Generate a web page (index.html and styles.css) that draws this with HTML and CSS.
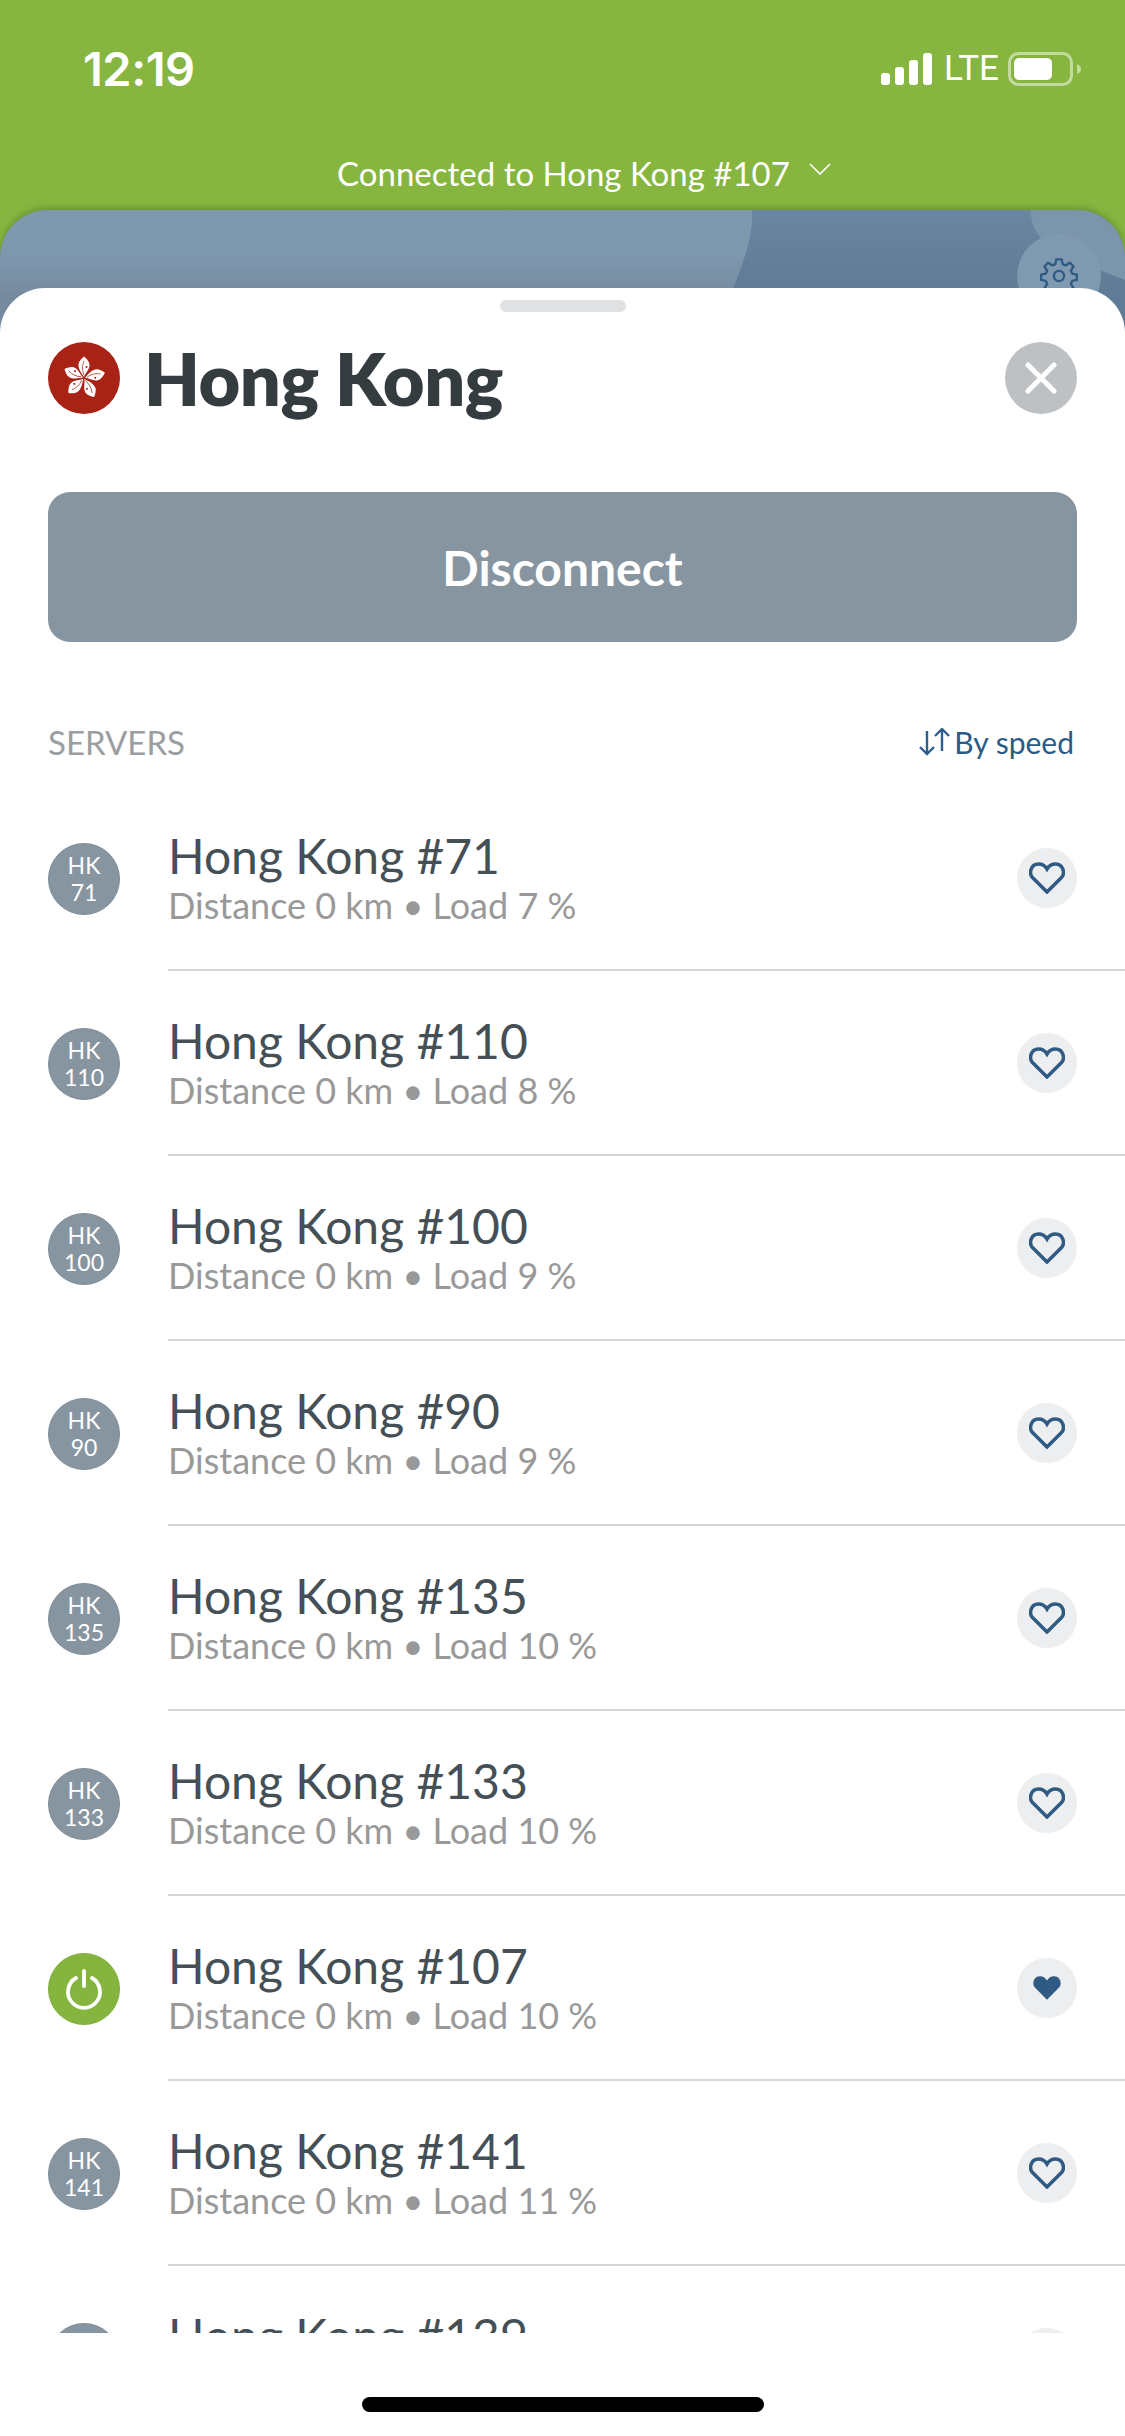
FILE: index.html
```html
<!DOCTYPE html>
<html lang="en">
<head>
    <meta charset="UTF-8">
    <meta name="viewport" content="width=device-width, initial-scale=1.0">
    <title>Hong Kong servers</title>
    <link rel="stylesheet" href="styles.css">
</head>
<body>
    <svg class="defs" width="0" height="0">
        <defs>
            <path id="heart" d="M18 30 L3.5 15.5 C-0.5 11 2 2 9.5 2 C13.5 2 16.5 4.5 18 7 C19.5 4.5 22.5 2 26.5 2 C34 2 36.5 11 32.5 15.5 Z"/>
            <g id="petal">
                <path fill="#fff" d="M0 -1 C-2 -4 -6 -9 -5.5 -14 C-5 -17 -2 -20 0 -21.5 C2.5 -19.5 6 -16 5.5 -12 C5 -8 1.5 -5 0 -1 Z"/>
                <path fill="none" stroke="#a82216" stroke-width=".7" d="M0 -3 C-2 -8 -2 -12 0 -17"/>
                <circle fill="#a82216" cx="2.5" cy="-11" r="1"/>
            </g>
        </defs>
    </svg>
    <div class="app">
        <div class="topbar">
            <div class="status">
                <span class="time">12:19</span>
                <div class="status-right">
                    <svg class="signal" width="52" height="32" viewBox="0 0 52 32" fill="#fff">
                        <rect x="0" y="20" width="9" height="12" rx="3"/>
                        <rect x="14" y="14" width="9" height="18" rx="3"/>
                        <rect x="28" y="7" width="9" height="25" rx="3"/>
                        <rect x="42" y="0" width="9" height="32" rx="3"/>
                    </svg>
                    <span class="lte">LTE</span>
                    <svg class="battery" width="74" height="34" viewBox="0 0 74 34">
                        <rect x="1.5" y="1.5" width="62" height="31" rx="9" fill="none" stroke="#fff" stroke-opacity=".5" stroke-width="3"/>
                        <rect x="6" y="6" width="38" height="22" rx="5" fill="#fff"/>
                        <path d="M69 12 C72 13 73 15 73 17 C73 19 72 21 69 22 Z" fill="#fff" fill-opacity=".5"/>
                    </svg>
                </div>
            </div>
            <div class="connected">
                <span>Connected to Hong Kong #107</span>
                <svg width="22" height="12" viewBox="0 0 22 12" fill="none" stroke="#fff" stroke-width="1.6"><path d="M1 1 L11 11 L21 1"/></svg>
            </div>
        </div>

        <div class="map">
            <svg class="map-art" width="1125" height="123" viewBox="0 0 1125 123" preserveAspectRatio="none">
                <defs>
                    <linearGradient id="land" x1="0" y1="0" x2="0" y2="1">
                        <stop offset="0" stop-color="#7e98ae"/>
                        <stop offset=".4" stop-color="#7d97ad"/>
                        <stop offset=".7" stop-color="#768a9f"/>
                    </linearGradient>
                    <linearGradient id="sea" x1="0" y1="0" x2="0" y2="1">
                        <stop offset="0" stop-color="#6a87a3"/>
                        <stop offset=".65" stop-color="#5f7b95"/>
                    </linearGradient>
                </defs>
                <rect width="1125" height="123" fill="url(#sea)"/>
                <path d="M0 0 H752 C754 20 745 50 733 78 L725 123 H0 Z" fill="url(#land)"/>
                <path d="M1031 0 C1030 18 1040 30 1060 45 L1125 70 V0 Z" fill="#7b95ab"/>
            </svg>
            <div class="settings">
                <svg width="38" height="38" viewBox="0 0 24 24" fill="none" stroke="#2f5a84" stroke-width="1.5" stroke-linejoin="round"><circle cx="12" cy="12" r="3.2"/><path d="M10.3 1.5 h3.4 l.6 3 1.9 .8 2.6 -1.7 2.4 2.4 -1.7 2.6 .8 1.9 3 .6 v3.4 l-3 .6 -.8 1.9 1.7 2.6 -2.4 2.4 -2.6 -1.7 -1.9 .8 -.6 3 h-3.4 l-.6 -3 -1.9 -.8 -2.6 1.7 -2.4 -2.4 1.7 -2.6 -.8 -1.9 -3 -.6 v-3.4 l3 -.6 .8 -1.9 -1.7 -2.6 2.4 -2.4 2.6 1.7 1.9 -.8 Z"/></svg>
            </div>
        </div>

        <div class="sheet">
            <div class="handle"></div>
            <div class="title-row">
                <svg class="flag" width="72" height="72" viewBox="0 0 72 72">
                    <circle cx="36" cy="36" r="36" fill="#a82216"/>
                    <g transform="translate(36 36)">
                        <use href="#petal"/>
                        <use href="#petal" transform="rotate(76)"/>
                        <use href="#petal" transform="rotate(152)"/>
                        <use href="#petal" transform="rotate(226)"/>
                        <use href="#petal" transform="rotate(295)"/>
                    </g>
                </svg>
                <h1>Hong Kong</h1>
                <button class="close">
                    <svg width="32" height="32" viewBox="0 0 32 32" stroke="#fff" stroke-width="5" stroke-linecap="round"><path d="M3 3 L29 29 M29 3 L3 29"/></svg>
                </button>
            </div>
            <button class="disconnect">Disconnect</button>
            <div class="section-head">
                <span class="section-title">SERVERS</span>
                <span class="sort">
                    <svg width="32" height="28" viewBox="0 0 32 28" fill="none" stroke="#2f5f8c" stroke-width="2.4"><path d="M8 3 V26 M1 19 L8 26 L15 19"/><path d="M23 23 V1 M16 8 L23 1 L30 8"/></svg>
                    By speed
                </span>
            </div>

            <div class="list">
                <div class="row">
                    <div class="badge">HK<br>71</div>
                    <div class="row-body">
                        <div class="row-text"><div class="name">Hong Kong #71</div><div class="meta">Distance 0 km • Load 7 %</div></div>
                        <div class="fav"><svg class="heart" width="36" height="32" viewBox="0 0 36 32"><use href="#heart"/></svg></div>
                    </div>
                </div>
                <div class="row">
                    <div class="badge">HK<br>110</div>
                    <div class="row-body">
                        <div class="row-text"><div class="name">Hong Kong #110</div><div class="meta">Distance 0 km • Load 8 %</div></div>
                        <div class="fav"><svg class="heart" width="36" height="32" viewBox="0 0 36 32"><use href="#heart"/></svg></div>
                    </div>
                </div>
                <div class="row">
                    <div class="badge">HK<br>100</div>
                    <div class="row-body">
                        <div class="row-text"><div class="name">Hong Kong #100</div><div class="meta">Distance 0 km • Load 9 %</div></div>
                        <div class="fav"><svg class="heart" width="36" height="32" viewBox="0 0 36 32"><use href="#heart"/></svg></div>
                    </div>
                </div>
                <div class="row">
                    <div class="badge">HK<br>90</div>
                    <div class="row-body">
                        <div class="row-text"><div class="name">Hong Kong #90</div><div class="meta">Distance 0 km • Load 9 %</div></div>
                        <div class="fav"><svg class="heart" width="36" height="32" viewBox="0 0 36 32"><use href="#heart"/></svg></div>
                    </div>
                </div>
                <div class="row">
                    <div class="badge">HK<br>135</div>
                    <div class="row-body">
                        <div class="row-text"><div class="name">Hong Kong #135</div><div class="meta">Distance 0 km • Load 10 %</div></div>
                        <div class="fav"><svg class="heart" width="36" height="32" viewBox="0 0 36 32"><use href="#heart"/></svg></div>
                    </div>
                </div>
                <div class="row">
                    <div class="badge">HK<br>133</div>
                    <div class="row-body">
                        <div class="row-text"><div class="name">Hong Kong #133</div><div class="meta">Distance 0 km • Load 10 %</div></div>
                        <div class="fav"><svg class="heart" width="36" height="32" viewBox="0 0 36 32"><use href="#heart"/></svg></div>
                    </div>
                </div>
                <div class="row">
                    <div class="badge badge-on">
                        <svg width="40" height="42" viewBox="0 0 40 42" fill="none" stroke="#fff" stroke-width="3.8" stroke-linecap="round"><path d="M12 10 A16 16 0 1 0 28 10"/><path d="M20 3 V18"/></svg>
                    </div>
                    <div class="row-body">
                        <div class="row-text"><div class="name">Hong Kong #107</div><div class="meta">Distance 0 km • Load 10 %</div></div>
                        <div class="fav"><svg class="heart-on" width="30" height="28" viewBox="0 0 36 32"><use href="#heart"/></svg></div>
                    </div>
                </div>
                <div class="row">
                    <div class="badge">HK<br>141</div>
                    <div class="row-body">
                        <div class="row-text"><div class="name">Hong Kong #141</div><div class="meta">Distance 0 km • Load 11 %</div></div>
                        <div class="fav"><svg class="heart" width="36" height="32" viewBox="0 0 36 32"><use href="#heart"/></svg></div>
                    </div>
                </div>
                <div class="row">
                    <div class="badge">HK<br>139</div>
                    <div class="row-body">
                        <div class="row-text"><div class="name">Hong Kong #139</div><div class="meta">Distance 0 km • Load 11 %</div></div>
                        <div class="fav"><svg class="heart" width="36" height="32" viewBox="0 0 36 32"><use href="#heart"/></svg></div>
                    </div>
                </div>
            </div>

            <div class="home-zone"><div class="home-bar"></div></div>
        </div>
    </div>
</body>
</html>
```

FILE: styles.css
```css
* {
    box-sizing: border-box;
}
body {
    margin: 0;
    padding: 0;
    font-family: Lato, "Open Sans", sans-serif;
    background-color: #86b540;
}
.defs {
    display: block;
    height: 0;
}
.app {
    width: 1125px;
    height: 2436px;
    display: flex;
    flex-direction: column;
    overflow: hidden;
}

/* green top area */
.topbar {
    height: 210px;
    flex-shrink: 0;
    color: white;
}
.status {
    height: 153px;
    display: flex;
    justify-content: space-between;
    align-items: flex-start;
    padding: 42px 43px 0 83px;
}
.time {
    font-family: Inter, Roboto, sans-serif;
    font-size: 47px;
    font-weight: 600;
    line-height: 54px;
    letter-spacing: -0.5px;
}
.status-right {
    display: flex;
    align-items: flex-start;
    margin-top: 10px;
}
.signal {
    margin-top: 1px;
}
.lte {
    font-family: Roboto, sans-serif;
    font-size: 35px;
    line-height: 34px;
    margin-left: 11px;
    margin-right: 9px;
}
.connected {
    display: flex;
    justify-content: center;
    align-items: center;
    gap: 19px;
    padding-left: 43px;
    font-size: 33px;
    line-height: 40px;
}
.connected svg {
    margin-top: -8px;
}

/* map peeking out behind the sheet */
.map {
    position: relative;
    height: 123px;
    flex-shrink: 0;
    border-radius: 48px 48px 0 0;
    overflow: hidden;
    box-shadow: 0 -2px 6px rgba(60, 90, 30, 0.4);
}
.map-art {
    display: block;
}
.settings {
    position: absolute;
    top: 24px;
    left: 1017px;
    width: 84px;
    height: 84px;
    border-radius: 50%;
    background-color: #7f9ab0;
    display: flex;
    align-items: center;
    justify-content: center;
}

/* white sheet */
.sheet {
    position: relative;
    flex: 1;
    min-height: 0;
    margin-top: -45px;
    background-color: white;
    border-radius: 45px 45px 0 0;
    display: flex;
    flex-direction: column;
}
.handle {
    width: 126px;
    height: 12px;
    margin: 12px auto 0;
    background-color: #dfe1e3;
    border-radius: 6px;
    flex-shrink: 0;
}
.title-row {
    display: flex;
    align-items: center;
    height: 72px;
    margin: 30px 48px 0;
    flex-shrink: 0;
}
.flag {
    flex-shrink: 0;
}
h1 {
    margin: 0 0 0 24px;
    flex: 1;
    font-size: 72px;
    font-weight: 800;
    line-height: 72px;
    letter-spacing: -0.4px;
    color: #343c40;
}
.close {
    width: 72px;
    height: 72px;
    padding: 0;
    border: none;
    border-radius: 50%;
    background-color: #bec1c4;
    display: flex;
    align-items: center;
    justify-content: center;
}
.disconnect {
    height: 150px;
    margin: 78px 48px 0;
    flex-shrink: 0;
    border: none;
    border-radius: 22px;
    background-color: #8795a1;
    color: white;
    font-family: Lato, sans-serif;
    font-size: 48px;
    font-weight: 700;
}
.section-head {
    height: 144px;
    flex-shrink: 0;
    padding: 56px 51px 0 48px;
    display: flex;
    justify-content: space-between;
    align-items: center;
}
.section-title {
    font-size: 33px;
    color: #9a9ea1;
}
.sort {
    display: flex;
    align-items: center;
    gap: 3px;
    font-size: 30px;
    color: #2a5b87;
}

/* server list */
.list {
    flex: 1;
    min-height: 0;
    overflow: hidden;
}
.row {
    height: 185px;
    display: flex;
    align-items: center;
    padding-left: 48px;
}
.badge {
    width: 72px;
    height: 72px;
    flex-shrink: 0;
    border-radius: 50%;
    background-color: #8795a1;
    border: 1px solid #7d8b97;
    color: white;
    font-size: 23px;
    line-height: 27px;
    text-align: center;
    display: flex;
    align-items: center;
    justify-content: center;
}
.badge-on {
    background-color: #85b43f;
    border-color: #7fae3b;
}
.row-body {
    flex: 1;
    height: 100%;
    margin-left: 48px;
    padding-right: 48px;
    border-bottom: 2px solid #d4d6d8;
    display: flex;
    align-items: center;
    justify-content: space-between;
}
.row-text {
    padding-top: 6px;
}
.name {
    font-size: 48px;
    line-height: 45px;
    color: #454f56;
}
.meta {
    margin-top: 5px;
    font-size: 36px;
    line-height: 45px;
    color: #999;
}
.fav {
    width: 60px;
    height: 60px;
    border-radius: 50%;
    background-color: #eceef0;
    display: flex;
    align-items: center;
    justify-content: center;
}
.heart {
    fill: none;
    stroke: #2f5a84;
    stroke-width: 3.5;
}
.heart-on {
    fill: #2f5a84;
}

.home-zone {
    height: 103px;
    flex-shrink: 0;
    padding-top: 64px;
}
.home-bar {
    width: 402px;
    height: 15px;
    margin: 0 auto;
    border-radius: 8px;
    background-color: black;
}
```
